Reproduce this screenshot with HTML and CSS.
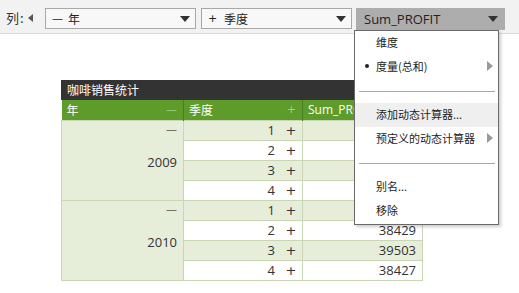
FILE: index.html
```html
<!DOCTYPE html>
<html lang="zh-CN">
<head>
    <meta charset="UTF-8">
    <title>咖啡销售统计</title>
    <link rel="stylesheet" href="styles.css">
</head>
<body>
    <div class="toolbar">
        <span class="label">列:</span>
        <span class="scroll-left"></span>
        <div class="dropdown">
            <span class="sign">&#8212;</span>
            <span class="name">年</span>
            <span class="caret"></span>
        </div>
        <div class="dropdown">
            <span class="sign">+</span>
            <span class="name">季度</span>
            <span class="caret"></span>
        </div>
        <div class="dropdown active">
            <span class="name">Sum_PROFIT</span>
            <span class="caret"></span>
        </div>
    </div>

    <div class="pivot">
        <div class="pivot-title">咖啡销售统计</div>
        <table>
            <thead>
                <tr>
                    <th class="col-year">年<span class="toggle">&#8212;</span></th>
                    <th class="col-quarter">季度<span class="toggle">+</span></th>
                    <th class="col-value">Sum_PROFIT</th>
                </tr>
            </thead>
            <tbody>
                <!-- values under the open menu are left empty -->
                <tr class="alt">
                    <td class="year" rowspan="4"><span class="collapse">&#8212;</span><span class="year-num">2009</span></td>
                    <td class="quarter">1<span class="plus">+</span></td>
                    <td class="value"></td>
                </tr>
                <tr>
                    <td class="quarter">2<span class="plus">+</span></td>
                    <td class="value"></td>
                </tr>
                <tr class="alt">
                    <td class="quarter">3<span class="plus">+</span></td>
                    <td class="value"></td>
                </tr>
                <tr>
                    <td class="quarter">4<span class="plus">+</span></td>
                    <td class="value"></td>
                </tr>
                <tr class="alt">
                    <td class="year" rowspan="4"><span class="collapse">&#8212;</span><span class="year-num">2010</span></td>
                    <td class="quarter">1<span class="plus">+</span></td>
                    <td class="value"></td>
                </tr>
                <tr>
                    <td class="quarter">2<span class="plus">+</span></td>
                    <td class="value">38429</td>
                </tr>
                <tr class="alt">
                    <td class="quarter">3<span class="plus">+</span></td>
                    <td class="value">39503</td>
                </tr>
                <tr>
                    <td class="quarter">4<span class="plus">+</span></td>
                    <td class="value">38427</td>
                </tr>
            </tbody>
        </table>
    </div>

    <!-- context menu of the Sum_PROFIT field -->
    <div class="menu">
        <div class="menu-item">维度</div>
        <div class="menu-item">
            <span class="bullet"></span>度量(总和)<span class="sub-arrow"></span>
        </div>
        <div class="menu-sep"></div>
        <div class="menu-item hover">添加动态计算器...</div>
        <div class="menu-item">预定义的动态计算器<span class="sub-arrow"></span></div>
        <div class="menu-sep"></div>
        <div class="menu-item">别名...</div>
        <div class="menu-item">移除</div>
    </div>
</body>
</html>
```

FILE: styles.css
```css
* {
    margin: 0;
    padding: 0;
    box-sizing: border-box;
}

body {
    background: #fff;
    font-family: "Noto Sans CJK SC", "Open Sans", sans-serif;
    font-size: 12px;
    color: #222;
    width: 519px;
    height: 293px;
    position: relative;
    overflow: hidden;
}

/* top bar with the column fields */
.toolbar {
    height: 34px;
    background: #f2f2f2;
    border-bottom: 1px solid #dcdcdc;
    display: flex;
    align-items: flex-start;
    padding: 8px 0 0 6px;
}

.label {
    font-size: 13px;
    line-height: 20px;
    color: #333;
    width: 20px;
    letter-spacing: 1px;
}

.scroll-left {
    width: 0;
    height: 0;
    margin: 6px 0 0 2px;
    border-top: 4px solid transparent;
    border-bottom: 4px solid transparent;
    border-right: 5px solid #555;
}

.dropdown {
    width: 151px;
    height: 21px;
    margin-left: 5px;
    border: 1px solid #a8a8a8;
    background: #f8f8f8;
    display: flex;
    align-items: center;
    padding: 0 5px 0 6px;
    font-size: 12px;
    color: #222;
}

.dropdown:first-of-type {
    margin-left: 12px;
}

.dropdown .sign {
    width: 16px;
    font-family: "DejaVu Sans", sans-serif;
    font-size: 11px;
}

.dropdown .name {
    flex: 1;
}

.caret {
    width: 0;
    height: 0;
    border-left: 5px solid transparent;
    border-right: 5px solid transparent;
    border-top: 6px solid #333;
}

.dropdown.active {
    margin-left: 4px;
    width: 149px;
    height: 22px;
    border: none;
    background: #adadad;
    padding: 0 7px 0 8px;
    font-family: "Open Sans", sans-serif;
    font-size: 13px;
}

/* pivot table */
.pivot {
    width: 361px;
    margin: 46px 0 0 61px;
}

.pivot-title {
    height: 20px;
    background: #333;
    color: #fff;
    line-height: 20px;
    padding-left: 6px;
    font-size: 12px;
}

table {
    width: 361px;
    border-collapse: collapse;
    table-layout: fixed;
}

th {
    height: 20px;
    background: #5d9b2b;
    color: #fff;
    font-weight: normal;
    text-align: left;
    padding: 0 5px;
    position: relative;
    border-left: 1px solid #497d1f;
}

th:first-child {
    border-left: none;
}

th .toggle {
    position: absolute;
    right: 6px;
    top: 0;
    color: #a6cf80;
    font-family: "DejaVu Sans", sans-serif;
    font-size: 11px;
    line-height: 20px;
}

.col-year { width: 122px; }
.col-quarter { width: 119px; }
.col-value {
    width: 120px;
    font-family: "Open Sans", sans-serif;
}

td {
    height: 20px;
    border: 1px solid #c9d6b6;
    font-family: "Open Sans", sans-serif;
    font-size: 12px;
    color: #333;
    text-align: right;
}

tr.alt td {
    background: #e6edd8;
}

td.year {
    background: #e6edd8;
    vertical-align: top;
    position: relative;
    padding-right: 6px;
}

.collapse {
    display: block;
    height: 20px;
    line-height: 18px;
    font-family: "DejaVu Sans", sans-serif;
    font-size: 11px;
    color: #555;
}

.year-num {
    display: block;
    margin-top: 12px;
    font-size: 13px;
}

td.quarter {
    padding-right: 4px;
    font-size: 13px;
}

.plus {
    display: inline-block;
    width: 14px;
    margin-left: 9px;
    text-align: center;
    font-family: "DejaVu Sans", sans-serif;
    font-size: 13px;
}

td.value {
    padding-right: 6px;
    font-size: 13px;
}

/* dropdown menu */
.menu {
    position: absolute;
    left: 354px;
    top: 30px;
    width: 145px;
    height: 195px;
    background: #fff;
    border: 1px solid #6a6a6a;
    box-shadow: 2px 2px 3px rgba(0, 0, 0, 0.2);
}

.menu-item {
    height: 24px;
    line-height: 22px;
    padding-left: 21px;
    font-size: 11px;
    color: #222;
    position: relative;
}

.menu-item.hover {
    background: #efefef;
}

.bullet {
    position: absolute;
    left: 10px;
    top: 9px;
    width: 4px;
    height: 4px;
    border-radius: 50%;
    background: #222;
}

.sub-arrow {
    position: absolute;
    right: 5px;
    top: 6px;
    width: 0;
    height: 0;
    border-top: 5px solid transparent;
    border-bottom: 5px solid transparent;
    border-left: 6px solid #999;
}

.menu-sep {
    height: 1px;
    background: #a8a8a8;
    margin: 12px 3px 11px 4px;
}

.menu-sep + .menu-item + .menu-item + .menu-sep + .menu-item {
    margin-top: 1px;
}
```
